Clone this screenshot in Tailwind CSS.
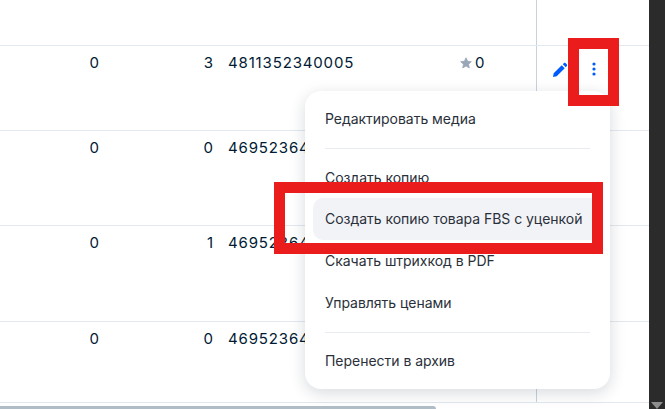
<!DOCTYPE html>
<html>
<head>
<meta charset="utf-8">
<script src="https://cdn.jsdelivr.net/npm/@tailwindcss/browser@4"></script>
</head>
<body class="bg-white overflow-hidden">
<div class="relative w-[665px] h-[409px] flex font-['Inter','Noto_Sans',sans-serif] text-[15px] text-[#001a34] overflow-hidden">
  <div class="w-[649px] flex flex-col shrink-0">
    <div class="h-[45px] shrink-0 flex border-b border-[#e2e8f0] box-content">
      <div class="w-[536px]"></div>
      <div class="w-px bg-[#c5d2e0]"></div>
    </div>
    <div class="h-[84px] shrink-0 flex border-b border-[#e2e8f0] box-content">
      <div class="w-[99px] pt-[7px] text-right leading-5">0</div>
      <div class="w-[114px] pt-[7px] text-right leading-5">3</div>
      <div class="w-[231px] pl-[15px] pt-[7px] leading-5 tracking-[0.85px]">4811352340005</div>
      <div class="w-[92px] pt-[7px] pl-[16px] flex items-start gap-[3px] leading-5">
        <svg class="mt-[4px]" width="12" height="12" viewBox="0 0 24 24" fill="#98a6b6"><path d="M12 1.5l3.2 6.9 7.5.9-5.6 5.1 1.5 7.4L12 18.1l-6.6 3.7 1.5-7.4-5.6-5.1 7.5-.9z" stroke="#98a6b6" stroke-width="1.5" stroke-linejoin="round"/></svg>
        <span>0</span>
      </div>
      <div class="w-px bg-[#c5d2e0]"></div>
      <div class="flex pl-[15px] pt-[16px] gap-[24px] items-start">
        <svg width="16" height="16" viewBox="0 0 16 16" fill="#005bff"><path d="M1 15l.7-3.7 8-8 3 3-8 8zM10.8 2.2l1.2-1.1c.5-.4 1-.4 1.5 0l1.4 1.4c.4.5.4 1 0 1.5l-1.1 1.2z"/></svg>
        <svg width="4" height="14" viewBox="0 0 4 14" fill="#005bff"><circle cx="2" cy="2" r="1.6"/><circle cx="2" cy="7" r="1.6"/><circle cx="2" cy="12" r="1.6"/></svg>
      </div>
    </div>
    <div class="h-[94px] shrink-0 flex border-b border-[#e2e8f0] box-content">
      <div class="w-[99px] pt-[7px] text-right leading-5">0</div>
      <div class="w-[114px] pt-[7px] text-right leading-5">0</div>
      <div class="w-[231px] pl-[15px] pt-[7px] leading-5 tracking-[0.85px]">4695236400000</div>
      <div class="w-[92px]"></div>
      <div class="w-px bg-[#c5d2e0]"></div>
    </div>
    <div class="h-[95px] shrink-0 flex border-b border-[#e2e8f0] box-content">
      <div class="w-[99px] pt-[7px] text-right leading-5">0</div>
      <div class="w-[114px] pt-[7px] text-right leading-5">1</div>
      <div class="w-[231px] pl-[15px] pt-[7px] leading-5 tracking-[0.85px]">4695236400000</div>
      <div class="w-[92px]"></div>
      <div class="w-px bg-[#c5d2e0]"></div>
    </div>
    <div class="h-[80px] shrink-0 flex border-b border-[#e2e8f0] box-content">
      <div class="w-[99px] pt-[7px] text-right leading-5">0</div>
      <div class="w-[114px] pt-[7px] text-right leading-5">0</div>
      <div class="w-[231px] pl-[15px] pt-[7px] leading-5 tracking-[0.85px]">4695236400000</div>
      <div class="w-[92px]"></div>
      <div class="w-px bg-[#c5d2e0]"></div>
    </div>
    <div class="mt-[3px] shrink-0 w-[436px] h-[4px] bg-[#b0bcc6] rounded-tr-[3px]"></div>
  </div>
  <div class="w-4 bg-[#2b2b2b] relative">
    <div class="absolute left-[2px] bottom-0 w-0 h-0 border-l-[6px] border-r-[6px] border-t-[7px] border-l-transparent border-r-transparent border-t-[#8e8e8e]"></div>
  </div>

  <div class="absolute left-[305px] top-[91px] w-[305px] h-[298px] bg-white rounded-[16px] shadow-[0_4px_16px_rgba(0,26,52,0.16)] px-2 py-2 text-[14px] tracking-[-0.03px] text-[#2a303a] flex flex-col">
    <div class="h-[40px] shrink-0 px-3 flex items-center pb-px">Редактировать медиа</div>
    <div class="mx-3 mt-[9px] h-px shrink-0 bg-[#e8ebef]"></div>
    <div class="mt-[7px] h-[42px] shrink-0 px-3 flex items-center pt-[1px]">Создать копию</div>
    <div class="h-[42px] shrink-0 px-3 flex items-center bg-[#f2f3f7] rounded-[10px] w-[289px] pb-[1px]">Создать копию товара FBS с уценкой</div>
    <div class="h-[42px] shrink-0 px-3 flex items-center pb-[2px]">Скачать штрихкод в PDF</div>
    <div class="h-[42px] shrink-0 px-3 flex items-center pb-[2px]">Управлять ценами</div>
    <div class="mx-3 mt-[8px] h-px shrink-0 bg-[#e8ebef]"></div>
    <div class="mt-[7px] h-[42px] shrink-0 px-3 flex items-center pb-[2px]">Перенести в архив</div>
  </div>

  <div class="absolute left-[568px] top-[38px] w-[51px] h-[68px] border-[11px] border-[#ea1c1c]"></div>
  <div class="absolute left-[274px] top-[182px] w-[329px] h-[72px] border-[11px] border-[#ea1c1c]"></div>
</div>
</body>
</html>
